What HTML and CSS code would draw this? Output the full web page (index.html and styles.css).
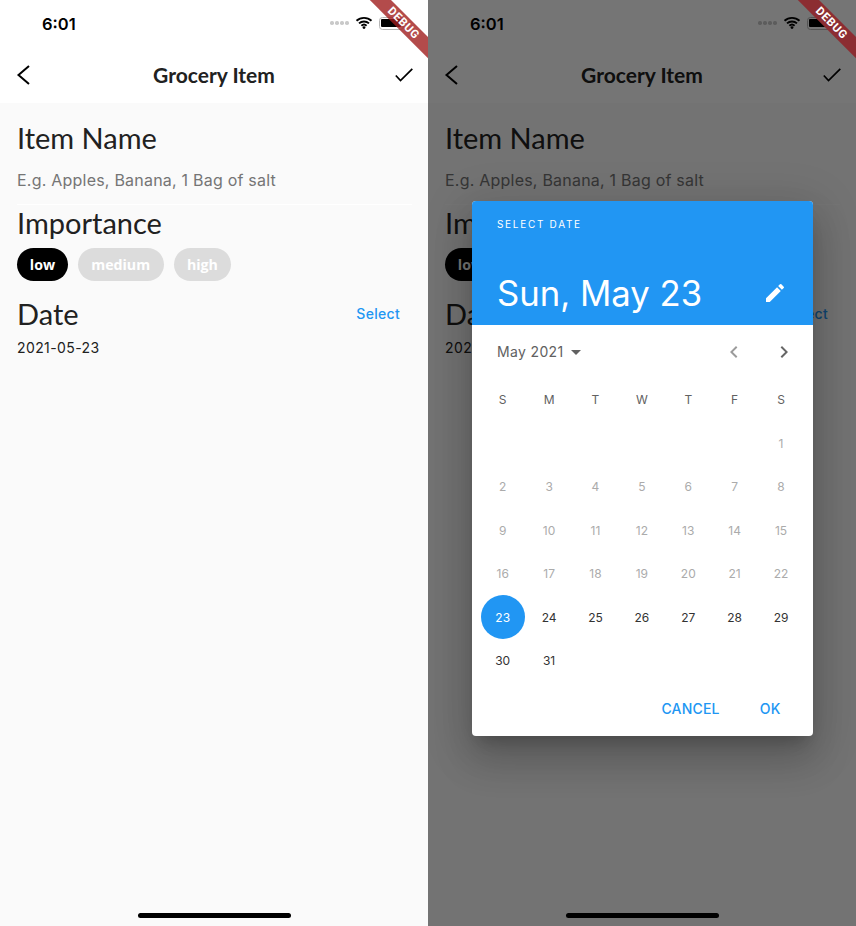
FILE: index.html
```html
<!DOCTYPE html>
<html lang="en">
<head>
<meta charset="utf-8">
<title>Grocery Item</title>
<link rel="stylesheet" href="styles.css">
</head>
<body>
<main class="screens">
  <section class="phone">
    <header class="top">
      <div class="status">
        <span class="time">6:01</span>
        <div class="status-icons">
          <span class="signal"><i></i><i></i><i></i><i></i></span>
          <svg class="wifi" width="18" height="13" viewBox="0 0 18 13"><path d="M1.500 4.800a11 11 0 0 1 15 0M4 7.400a7.400 7.400 0 0 1 10 0M6.400 9.800a3.800 3.800 0 0 1 5.200 0" fill="none" stroke="currentColor" stroke-width="1.900"/><circle cx="9" cy="11.600" r="1.400" fill="currentColor"/></svg>
          <span class="battery"><b></b></span>
        </div>
      </div>
      <nav class="bar">
        <svg width="16" height="20" viewBox="0 0 16 20"><path d="M14 1 3.500 10 14 19" fill="none" stroke="currentColor" stroke-width="2"/></svg>
        <h1 class="title">Grocery Item</h1>
        <svg width="18" height="14" viewBox="0 0 18 14"><path d="M.8 7.500 5.500 12.500 17.300.8" fill="none" stroke="currentColor" stroke-width="1.700"/></svg>
      </nav>
    </header>
    <div class="form">
      <h2 class="heading">Item Name</h2>
      <p class="hint">E.g. Apples, Banana, 1 Bag of salt</p>
      <div class="rule"></div>
      <h2 class="heading importance">Importance</h2>
      <div class="chips">
        <span class="chip on">low</span>
        <span class="chip">medium</span>
        <span class="chip">high</span>
      </div>
      <div class="date-row">
        <h2 class="heading">Date</h2>
        <span class="select">Select</span>
      </div>
      <p class="date">2021-05-23</p>
    </div>
    <div class="home"></div>
    <div class="ribbon">DEBUG</div>
  </section>

  <section class="phone">
    <header class="top">
      <div class="status">
        <span class="time">6:01</span>
        <div class="status-icons">
          <span class="signal"><i></i><i></i><i></i><i></i></span>
          <svg class="wifi" width="18" height="13" viewBox="0 0 18 13"><path d="M1.500 4.800a11 11 0 0 1 15 0M4 7.400a7.400 7.400 0 0 1 10 0M6.400 9.800a3.800 3.800 0 0 1 5.200 0" fill="none" stroke="currentColor" stroke-width="1.900"/><circle cx="9" cy="11.600" r="1.400" fill="currentColor"/></svg>
          <span class="battery"><b></b></span>
        </div>
      </div>
      <nav class="bar">
        <svg width="16" height="20" viewBox="0 0 16 20"><path d="M14 1 3.500 10 14 19" fill="none" stroke="currentColor" stroke-width="2"/></svg>
        <h1 class="title">Grocery Item</h1>
        <svg width="18" height="14" viewBox="0 0 18 14"><path d="M.8 7.500 5.500 12.500 17.300.8" fill="none" stroke="currentColor" stroke-width="1.700"/></svg>
      </nav>
    </header>
    <div class="form">
      <h2 class="heading">Item Name</h2>
      <p class="hint">E.g. Apples, Banana, 1 Bag of salt</p>
      <div class="rule"></div>
      <h2 class="heading importance">Importance</h2>
      <div class="chips">
        <span class="chip on">low</span>
        <span class="chip">medium</span>
        <span class="chip">high</span>
      </div>
      <div class="date-row">
        <h2 class="heading">Date</h2>
        <span class="select">Select</span>
      </div>
      <p class="date">2021-05-23</p>
    </div>
    <div class="home"></div>
    <div class="scrim"></div>
    <div class="ribbon dim">DEBUG</div>

    <div class="dialog">
      <div class="dlg-head">
        <div class="dlg-label">SELECT DATE</div>
        <div class="dlg-selected">
          <span class="dlg-date">Sun, May 23</span>
          <svg width="24" height="24" viewBox="0 0 24 24"><path fill="#fff" d="M3 17.250V21h3.750L17.810 9.940l-3.750-3.750L3 17.250zM20.710 7.040a1 1 0 0 0 0-1.410l-2.340-2.340a1 1 0 0 0-1.410 0l-1.830 1.830 3.750 3.750 1.830-1.830z"/></svg>
        </div>
      </div>
      <div class="dlg-body">
        <div class="month-row">
          <div class="month"><span>May 2021</span><i class="caret"></i></div>
          <div class="arrows">
            <svg width="24" height="24" viewBox="0 0 24 24"><path d="M15.400 7.400 14 6l-6 6 6 6 1.400-1.400L10.800 12z" fill="#9b9b9b"/></svg>
            <svg width="24" height="24" viewBox="0 0 24 24"><path d="M10 6 8.600 7.400 13.200 12l-4.600 4.600L10 18l6-6z" fill="#666"/></svg>
          </div>
        </div>
        <div class="cal weekdays">
          <span>S</span><span>M</span><span>T</span><span>W</span><span>T</span><span>F</span><span>S</span>
        </div>
        <div class="cal days">
          <span></span><span></span><span></span><span></span><span></span><span></span><span class="off">1</span>
          <span class="off">2</span><span class="off">3</span><span class="off">4</span><span class="off">5</span><span class="off">6</span><span class="off">7</span><span class="off">8</span>
          <span class="off">9</span><span class="off">10</span><span class="off">11</span><span class="off">12</span><span class="off">13</span><span class="off">14</span><span class="off">15</span>
          <span class="off">16</span><span class="off">17</span><span class="off">18</span><span class="off">19</span><span class="off">20</span><span class="off">21</span><span class="off">22</span>
          <span class="today">23</span><span>24</span><span>25</span><span>26</span><span>27</span><span>28</span><span>29</span>
          <span>30</span><span>31</span>
        </div>
        <div class="actions"><span>CANCEL</span><span>OK</span></div>
      </div>
    </div>
  </section>
</main>
</body>
</html>
```

FILE: styles.css
```css
* { box-sizing: border-box; }
html, body { margin: 0; padding: 0; }
body { width: 856px; height: 926px; overflow: hidden; background: #fafafa; }
h1, h2, p { margin: 0; font-weight: inherit; }

.screens { display: flex; width: 856px; height: 926px; }
.phone { position: relative; width: 428px; height: 926px; overflow: hidden; background: #fafafa; color: #212121; display: flex; flex-direction: column; }

.top { background: #fff; height: 103px; flex: none; }
.status { height: 47px; padding: 14px 0 0 42px; display: flex; justify-content: space-between; align-items: flex-start; color: #000; }
.time { font: 600 16.500px/20px "Inter", sans-serif; }
.status-icons { display: flex; align-items: center; gap: 6px; height: 20px; width: 98px; position: relative; top: -1px; }
.signal { display: flex; gap: 1.500px; }
.signal i { width: 3.500px; height: 3.500px; border-radius: 50%; background: #c9c9c9; }
.wifi { color: #000; position: relative; top: -1px; }
.battery { width: 25px; height: 13px; border: 1px solid #b5b5b5; border-radius: 3.500px; padding: 1.500px; }
.battery b { display: block; width: 100%; height: 100%; background: #000; border-radius: 1px; }

.bar { height: 56px; padding: 0 15px; display: flex; align-items: center; justify-content: space-between; color: #000; position: relative; }
.bar svg:first-child { margin-top: -1px; }
.title { position: absolute; left: 0; right: 0; text-align: center; font: 700 21px/26px "Lato", sans-serif; color: #212121; margin-top: -1px; pointer-events: none; }

.form { padding: 17px 17px 0; }
.heading { font: 400 29px/36px "Lato", sans-serif; color: #212121; }
.hint { font: 400 16px/20px "Inter", sans-serif; color: #757575; margin-top: 14px; letter-spacing: .22px; }
.rule { height: 1px; background: #fff; margin: 14px -1px 0 0; }
.importance { margin-top: 0; }
.chips { display: flex; gap: 10px; margin-top: 7px; }
.chip { height: 33px; padding: 0 13.400px; border-radius: 17px; background: #dcdcdc; color: #fff; font: 700 14.200px/33px "Open Sans", sans-serif; }
.chip.on { background: #000; padding: 0 12.800px; }
.date-row { display: flex; justify-content: space-between; align-items: flex-start; margin-top: 15px; padding-right: 11px; }
.select { font: 500 14px/20px "Inter", sans-serif; color: #2196f3; margin-top: 8px; letter-spacing: .3px; }
.date { font: 400 14px/20px "Inter", sans-serif; color: #212121; margin-top: 6px; letter-spacing: .4px; }

.home { position: absolute; left: 138px; bottom: 8px; width: 153px; height: 5px; border-radius: 3px; background: #000; }

.scrim { position: absolute; inset: 0; background: rgba(0, 0, 0, .54); }

.ribbon { position: absolute; top: 15px; right: -35px; width: 120px; height: 14.500px; transform: rotate(45deg); background: rgba(160, 30, 30, .8); color: #fff; font: 700 11.500px/14.500px "Roboto", sans-serif; letter-spacing: .6px; text-align: center; padding-left: 2px; }
.ribbon.dim { background: #8c2d32; }

.dialog { position: absolute; left: 44px; top: 201px; width: 340.500px; height: 535px; border-radius: 4px; background: #fff; box-shadow: 0 24px 38px 3px rgba(0,0,0,.14), 0 9px 46px 8px rgba(0,0,0,.12), 0 11px 15px -7px rgba(0,0,0,.2); }
.dlg-head { height: 124px; background: #2196f3; color: #fff; padding: 16px 25px 0; border-radius: 4px 4px 0 0; }
.dlg-label { font: 400 10px/14px "Inter", sans-serif; letter-spacing: 1.700px; }
.dlg-selected { display: flex; justify-content: space-between; align-items: center; margin-top: 40px; padding-right: 1px; }
.dlg-date { font: 400 34.700px/44px "Inter", "Roboto", sans-serif; }
.dlg-body { padding: 0 16px 0; }
.month-row { height: 54px; display: flex; justify-content: space-between; align-items: center; padding: 0 1px 0 9px; }
.month { display: flex; align-items: center; gap: 7px; font: 400 14px/20px "Inter", sans-serif; color: #616161; letter-spacing: .35px; }
.caret { width: 0; height: 0; border: 5.500px solid transparent; border-top-color: #616161; border-bottom: 0; }
.arrows { display: flex; gap: 26px; }
.cal { display: grid; grid-template-columns: repeat(7, 46.400px); text-align: center; margin-left: -8.500px; justify-content: start; }
.weekdays { height: 43px; font: 400 12px/41px "Inter", sans-serif; color: #616161; }
.days { grid-auto-rows: 43.400px; font: 400 12px/44.400px "Inter", sans-serif; color: #333; }
.days span { position: relative; z-index: 0; }
.off { color: #ababab; }
.today { color: #fff; }
.today::before { content: ""; position: absolute; left: 1px; top: -.500px; width: 44px; height: 44px; border-radius: 50%; background: #2196f3; z-index: -1; }
.actions { display: flex; justify-content: flex-end; gap: 40px; font: 500 14px/20px "Inter", sans-serif; color: #2196f3; padding: 17px 16px 0 0; letter-spacing: .2px; }
```
